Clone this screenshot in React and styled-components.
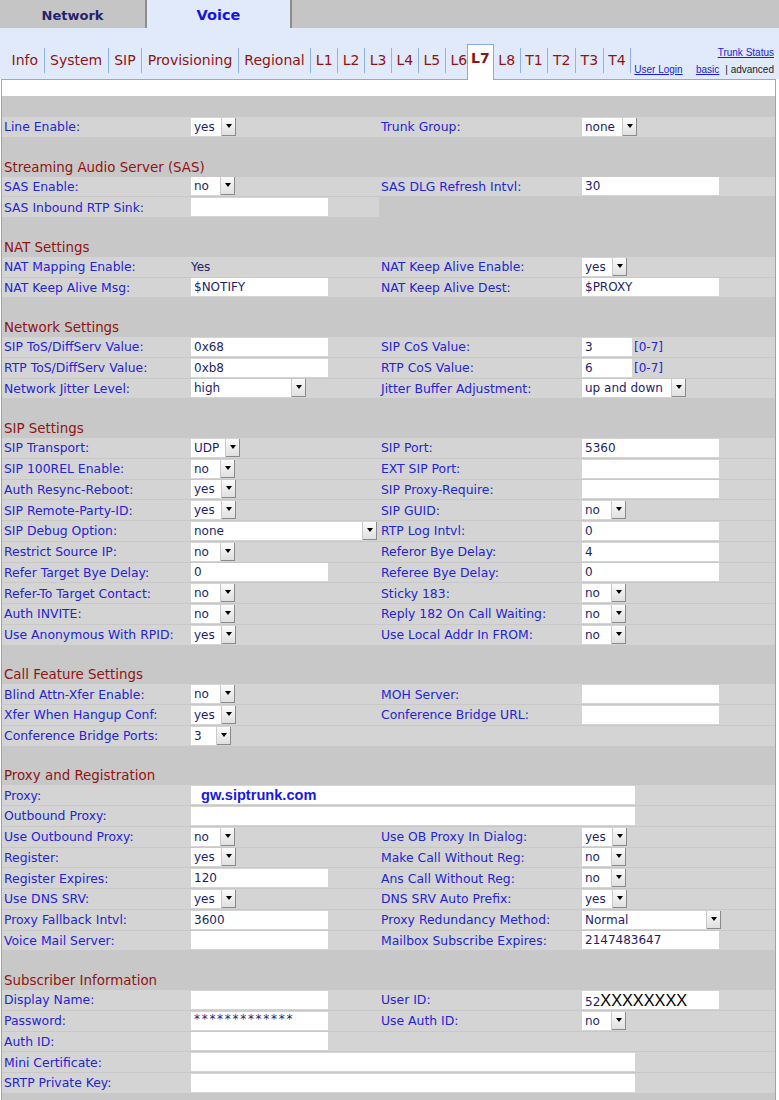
import React from 'react'
import styled, { createGlobalStyle } from 'styled-components'

const GlobalStyle = createGlobalStyle`
  body {
    margin: 0;
    background: #fff;
    font-family: "DejaVu Sans", Verdana, sans-serif;
  }
`

const Page = styled.div`
  width: 779px;
`

const TopBar = styled.div`
  display: flex;
  height: 28px;
  background: #c5c5c5;
`

const MainTab = styled.div`
  width: ${(p) => p.w}px;
  display: flex;
  align-items: center;
  justify-content: center;
  padding-top: 2px;
  box-sizing: border-box;
  background: ${(p) => (p.active ? '#e1eafa' : '#c5c5c5')};
  border-right: 2px solid #8d8d8d;
  font-weight: bold;
  font-size: ${(p) => (p.active ? '14.5px' : '13px')};
  color: ${(p) => (p.active ? '#1414e4' : '#23236c')};
`

const SubBar = styled.div`
  display: flex;
  align-items: flex-end;
  height: 51px;
  background: #e1eafa;
  padding-left: 6px;
`

const TabList = styled.div`
  display: flex;
  align-items: flex-end;
  align-self: stretch;
`

const SubTab = styled.div`
  height: 25px;
  line-height: 25px;
  margin-bottom: 6px;
  padding: 0 ${(p) => (p.short ? '4.6px' : '5.5px')};
  padding-right: ${(p) => (p.noSep ? '0' : undefined)};
  font-size: 14px;
  color: #8f1414;
  border-right: ${(p) => (p.noSep ? 'none' : '1px solid #8fb3f2')};
`

const ActiveTab = styled.div`
  position: relative;
  z-index: 1;
  height: 35px;
  line-height: 26px;
  margin-bottom: -1px;
  padding: 0 3px;
  background: #fff;
  border: 1px solid #84aaf0;
  border-bottom: none;
  font-size: 14px;
  font-weight: bold;
  color: #8f1414;
`

const UserLink = styled.a`
  margin: 0 0 4px 3px;
  font-family: "Liberation Sans", Arial, sans-serif;
  font-size: 10px;
  color: #1a1ae6;
  text-decoration: underline;
`

const RightLinks = styled.div`
  margin-left: auto;
  margin-bottom: 4px;
  padding-right: 5px;
  display: flex;
  flex-direction: column;
  align-items: flex-end;
  gap: 6px;
  font-family: "Liberation Sans", Arial, sans-serif;
  font-size: 10px;
`

const SmallLink = styled.a`
  color: #1a1ae6;
  text-decoration: underline;
`

const Plain = styled.span`
  color: #222;
  margin-left: 6px;
`

const Panel = styled.div`
  margin-left: 1px;
  width: 775px;
  box-sizing: border-box;
  border-left: 1px solid #7ea7ee;
  border-right: 1px solid #7ea7ee;
  background: #c8c8c8;
`

const WhiteBar = styled.div`
  height: 16px;
  margin-left: -1px;
  margin-right: -1px;
  background: #fff;
  border: 1px solid #84aaf0;
  border-bottom: none;
`

const Spacer = styled.div`
  height: ${(p) => p.h || 18}px;
`

const Header = styled.div`
  height: 19.75px;
  margin-bottom: 1px;
  display: flex;
  align-items: flex-end;
  padding-left: 2px;
  font-size: 13.4px;
  line-height: 17px;
  color: #8f1414;
`

const Row = styled.div`
  display: grid;
  grid-template-columns: 189px 188px 203px 1fr;
  height: 19.75px;
  margin-bottom: 1px;
`

const Cell = styled.div`
  display: flex;
  align-items: center;
  min-width: 0;
  padding-left: ${(p) => (p.label ? '2px' : '0')};
  grid-column: ${(p) => p.span || 'auto'};
  background: ${(p) => (p.dim ? '#c8c8c8' : '#d4d4d4')};
  font-size: 12.4px;
  color: #2424d8;
  white-space: nowrap;
`

const InputBox = styled.div`
  width: ${(p) => p.w}px;
  height: 18px;
  line-height: 18px;
  box-sizing: border-box;
  padding-left: 3px;
  background: #fff;
  font-size: 12px;
  color: #1e1e6c;
  overflow: hidden;
`

const Hint = styled.span`
  margin-left: 2px;
  font-size: 12px;
  color: #2424d8;
`

const SelectBox = styled.div`
  display: flex;
  width: ${(p) => p.w}px;
  height: 18px;
  background: #fff;
`

const SelectValue = styled.div`
  flex: 1;
  padding-left: 3px;
  line-height: 18px;
  font-size: 12px;
  color: #1e1e6c;
`

const SelectButton = styled.div`
  width: 15px;
  height: 18px;
  display: flex;
  justify-content: center;
  padding-top: 6px;
  box-sizing: border-box;
  background: linear-gradient(#fbfbfb, #dedede);
  border-left: 1px solid #c9c9c9;
  box-shadow: inset -1px -1px 0 #8a8a8a;
  &::after {
    content: '';
    border-left: 3.5px solid transparent;
    border-right: 3.5px solid transparent;
    border-top: 4px solid #000;
    height: 0;
  }
`

const PlainValue = styled.span`
  font-size: 12px;
  color: #23236a;
`

const ProxyValue = styled.span`
  padding-left: 7px;
  font-family: "Liberation Sans", Arial, sans-serif;
  font-weight: bold;
  font-size: 14.6px;
  color: #1818e6;
`

const Masked = styled.span`
  font-size: 12px;
  letter-spacing: 1.7px;
  color: #23237a;
  line-height: 14px;
  vertical-align: top;
`

const BigX = styled.span`
  font-family: "Liberation Sans", Arial, sans-serif;
  font-size: 16.3px;
  color: #000;
`

const Select = ({ value, w = 45 }) => (
  <SelectBox w={w}>
    <SelectValue>{value}</SelectValue>
    <SelectButton />
  </SelectBox>
)

const sel = (value, w) => ({ kind: 'select', value, w })
const inp = (value = '', w = 137, hint) => ({ kind: 'input', value, w, hint })
const txt = (value) => ({ kind: 'text', value })
const wide = (value) => ({ kind: 'wide', value })

const renderField = (f) => {
  if (!f) return null
  if (f.kind === 'select') return <Select value={f.value} w={f.w} />
  if (f.kind === 'text') return <PlainValue>{f.value}</PlainValue>
  if (f.kind === 'input')
    return (
      <>
        <InputBox w={f.w}>{f.value}</InputBox>
        {f.hint && <Hint>{f.hint}</Hint>}
      </>
    )
  if (f.kind === 'wide')
    return (
      <InputBox w={444}>
        {f.value && <ProxyValue>{f.value}</ProxyValue>}
      </InputBox>
    )
  if (f.kind === 'userid')
    return (
      <InputBox w={137}>
        52<BigX>XXXXXXXX</BigX>
      </InputBox>
    )
  if (f.kind === 'password')
    return (
      <InputBox w={137}>
        <Masked>*************</Masked>
      </InputBox>
    )
  return null
}

const sections = [
  {
    rows: [['Line Enable:', sel('yes', 45), 'Trunk Group:', sel('none', 55)]],
  },
  {
    title: 'Streaming Audio Server (SAS)',
    rows: [
      ['SAS Enable:', sel('no', 44), 'SAS DLG Refresh Intvl:', inp('30')],
      ['SAS Inbound RTP Sink:', inp(''), null, null, true],
    ],
  },
  {
    title: 'NAT Settings',
    rows: [
      ['NAT Mapping Enable:', txt('Yes'), 'NAT Keep Alive Enable:', sel('yes', 45)],
      ['NAT Keep Alive Msg:', inp('$NOTIFY'), 'NAT Keep Alive Dest:', inp('$PROXY')],
    ],
  },
  {
    title: 'Network Settings',
    rows: [
      ['SIP ToS/DiffServ Value:', inp('0x68'), 'SIP CoS Value:', inp('3', 50, '[0-7]')],
      ['RTP ToS/DiffServ Value:', inp('0xb8'), 'RTP CoS Value:', inp('6', 50, '[0-7]')],
      ['Network Jitter Level:', sel('high', 115), 'Jitter Buffer Adjustment:', sel('up and down', 104)],
    ],
  },
  {
    title: 'SIP Settings',
    rows: [
      ['SIP Transport:', sel('UDP', 49), 'SIP Port:', inp('5360')],
      ['SIP 100REL Enable:', sel('no', 44), 'EXT SIP Port:', inp('')],
      ['Auth Resync-Reboot:', sel('yes', 45), 'SIP Proxy-Require:', inp('')],
      ['SIP Remote-Party-ID:', sel('yes', 45), 'SIP GUID:', sel('no', 44)],
      ['SIP Debug Option:', sel('none', 186), 'RTP Log Intvl:', inp('0')],
      ['Restrict Source IP:', sel('no', 44), 'Referor Bye Delay:', inp('4')],
      ['Refer Target Bye Delay:', inp('0'), 'Referee Bye Delay:', inp('0')],
      ['Refer-To Target Contact:', sel('no', 44), 'Sticky 183:', sel('no', 44)],
      ['Auth INVITE:', sel('no', 44), 'Reply 182 On Call Waiting:', sel('no', 44)],
      ['Use Anonymous With RPID:', sel('yes', 45), 'Use Local Addr In FROM:', sel('no', 44)],
    ],
  },
  {
    title: 'Call Feature Settings',
    rows: [
      ['Blind Attn-Xfer Enable:', sel('no', 44), 'MOH Server:', inp('')],
      ['Xfer When Hangup Conf:', sel('yes', 45), 'Conference Bridge URL:', inp('')],
      ['Conference Bridge Ports:', sel('3', 40), null, null],
    ],
  },
  {
    title: 'Proxy and Registration',
    rows: [
      ['Proxy:', wide('gw.siptrunk.com')],
      ['Outbound Proxy:', wide('')],
      ['Use Outbound Proxy:', sel('no', 44), 'Use OB Proxy In Dialog:', sel('yes', 45)],
      ['Register:', sel('yes', 45), 'Make Call Without Reg:', sel('no', 44)],
      ['Register Expires:', inp('120'), 'Ans Call Without Reg:', sel('no', 44)],
      ['Use DNS SRV:', sel('yes', 45), 'DNS SRV Auto Prefix:', sel('yes', 45)],
      ['Proxy Fallback Intvl:', inp('3600'), 'Proxy Redundancy Method:', sel('Normal', 139)],
      ['Voice Mail Server:', inp(''), 'Mailbox Subscribe Expires:', inp('2147483647')],
    ],
  },
  {
    title: 'Subscriber Information',
    rows: [
      ['Display Name:', inp(''), 'User ID:', { kind: 'userid' }],
      ['Password:', { kind: 'password' }, 'Use Auth ID:', sel('no', 44)],
      ['Auth ID:', inp(''), null, null],
      ['Mini Certificate:', wide('')],
      ['SRTP Private Key:', wide('')],
    ],
  },
]

const FieldRow = ({ row }) => {
  const [label, field, rLabel, rField, dimRight] = row
  if (field && field.kind === 'wide') {
    return (
      <Row>
        <Cell label>{label}</Cell>
        <Cell span="2 / 5">{renderField(field)}</Cell>
      </Row>
    )
  }
  return (
    <Row>
      <Cell label>{label}</Cell>
      <Cell>{renderField(field)}</Cell>
      <Cell label dim={dimRight}>{rLabel}</Cell>
      <Cell dim={dimRight}>{renderField(rField)}</Cell>
    </Row>
  )
}

const subTabs = ['Info', 'System', 'SIP', 'Provisioning', 'Regional', 'L1', 'L2', 'L3', 'L4', 'L5', 'L6', 'L7', 'L8', 'T1', 'T2', 'T3', 'T4']

export default function App() {
  return (
    <Page>
      <GlobalStyle />
      <TopBar>
        <MainTab w={147}>Network</MainTab>
        <MainTab w={145} active>
          Voice
        </MainTab>
      </TopBar>
      <SubBar>
        <TabList>
          {subTabs.map((t) =>
            t === 'L7' ? (
              <ActiveTab key={t}>{t}</ActiveTab>
            ) : (
              <SubTab key={t} short={t.length === 2} noSep={t === 'L6'}>
                {t}
              </SubTab>
            )
          )}
        </TabList>
        <UserLink>User Login</UserLink>
        <RightLinks>
          <SmallLink>Trunk Status</SmallLink>
          <div>
            <SmallLink>basic</SmallLink>
            <Plain>| advanced</Plain>
          </div>
        </RightLinks>
      </SubBar>
      <Panel>
        <WhiteBar />
        <Spacer h={21} />
        {sections.map((s, i) => (
          <React.Fragment key={i}>
            {s.title && (
              <>
                <Spacer />
                <Header>{s.title}</Header>
              </>
            )}
            {s.rows.map((r, j) => (
              <FieldRow key={j} row={r} />
            ))}
          </React.Fragment>
        ))}
        <Spacer h={30} />
      </Panel>
    </Page>
  )
}
